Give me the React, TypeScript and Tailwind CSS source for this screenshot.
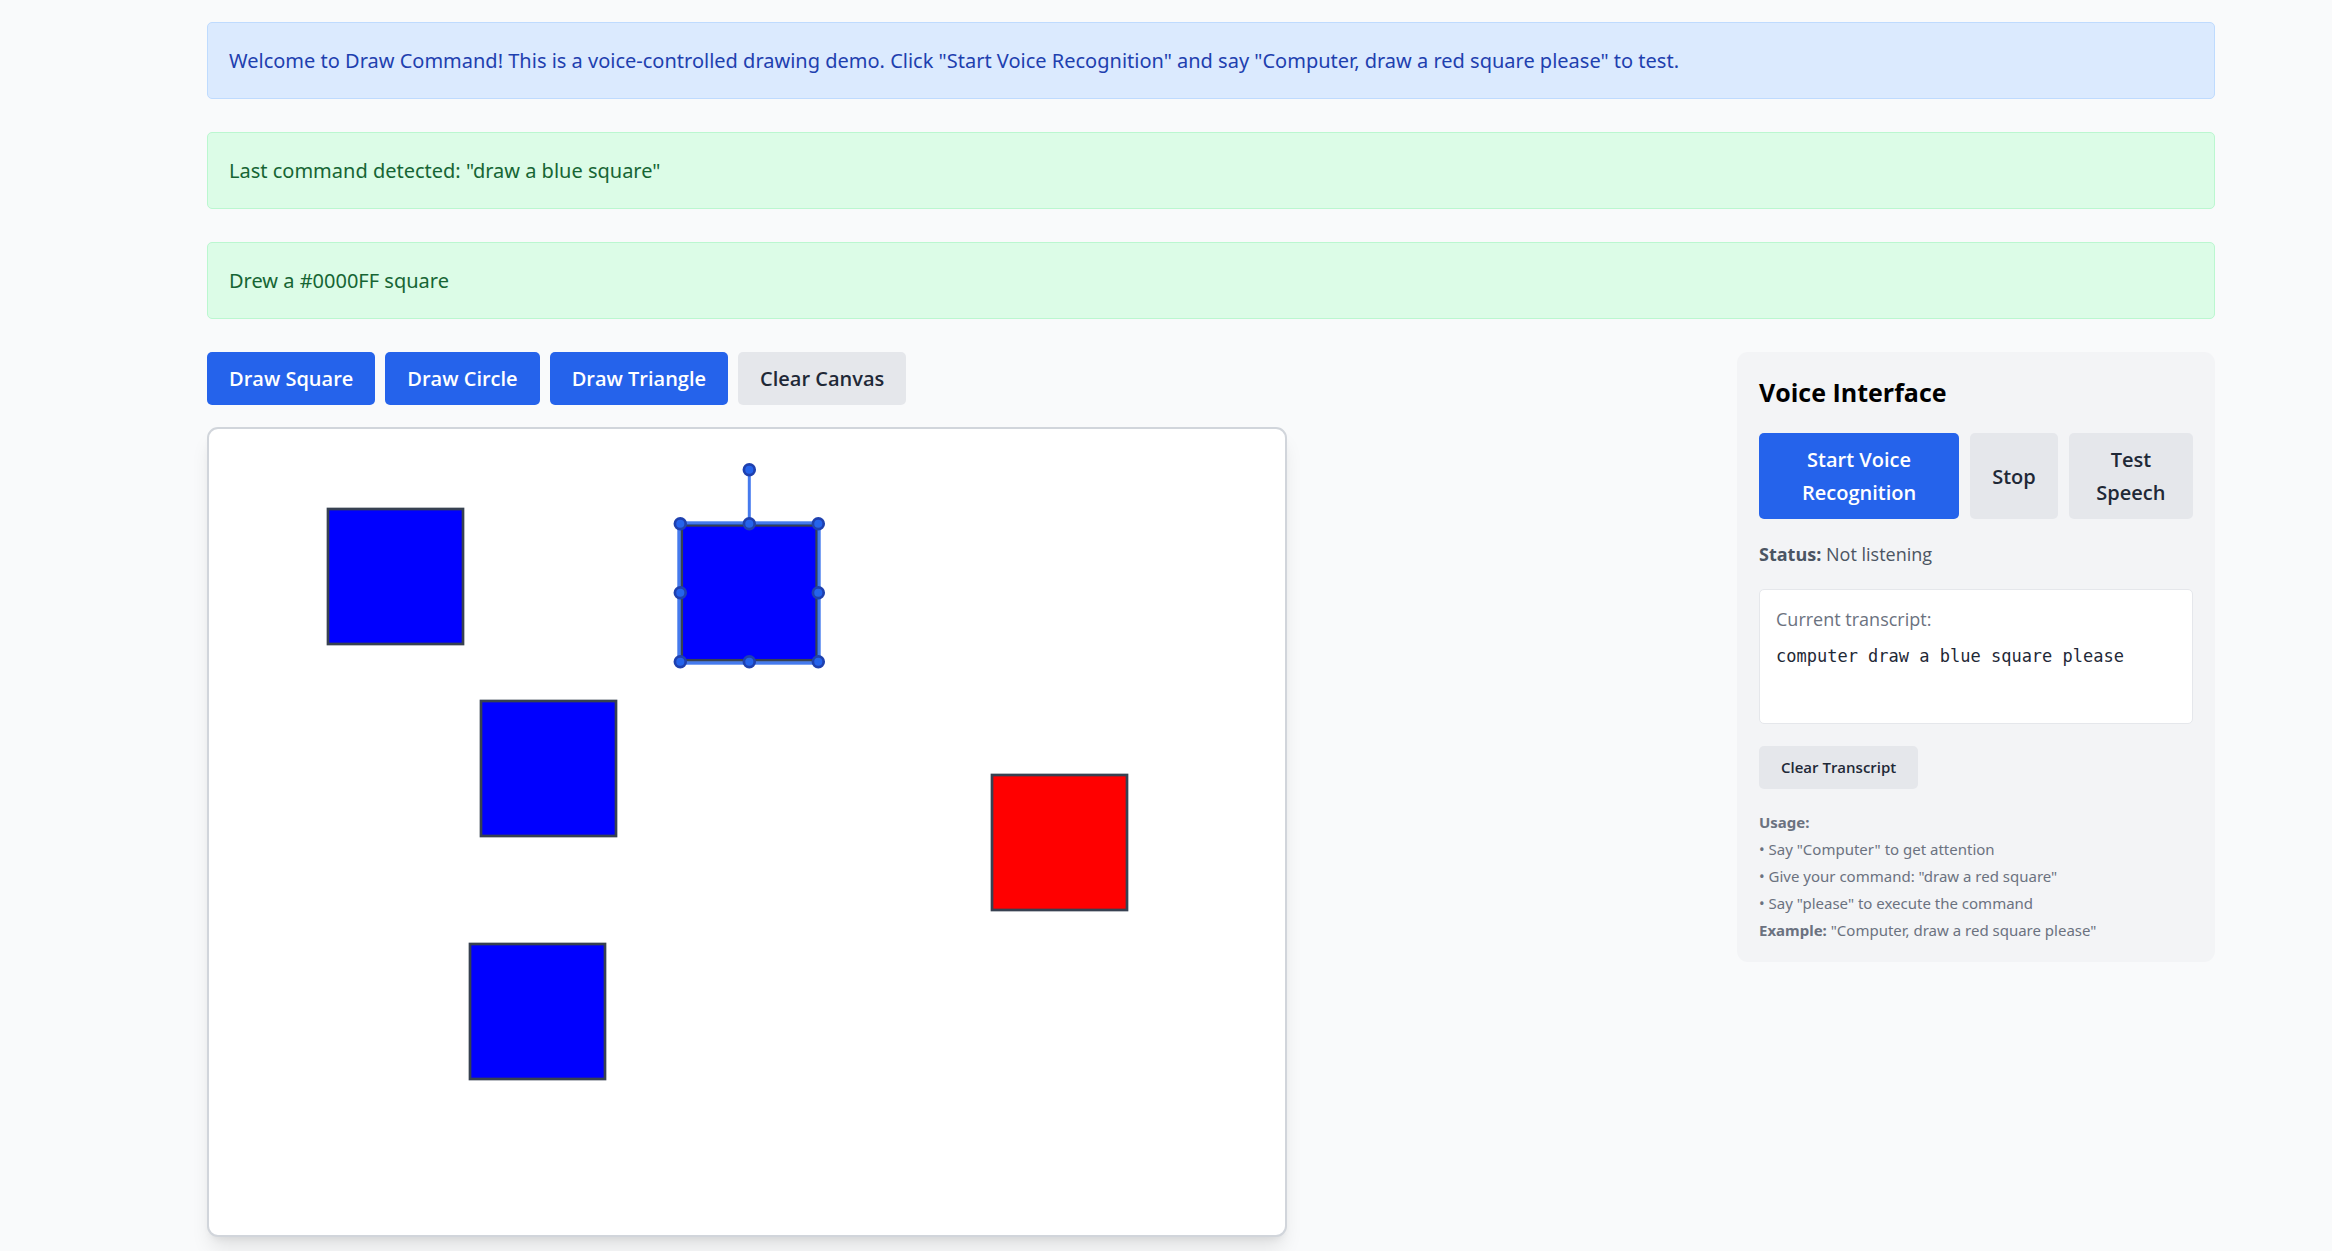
import type { ReactNode } from "react";

const SQUARES = [
  { x: 119, y: 80, fill: "#0000ff" },
  { x: 272, y: 272, fill: "#0000ff" },
  { x: 261, y: 515, fill: "#0000ff" },
  { x: 783, y: 346, fill: "#ff0000" },
];

const HANDLES = [
  [471, 95],
  [540, 95],
  [609, 95],
  [471, 164],
  [609, 164],
  [471, 233],
  [540, 233],
  [609, 233],
  [540, 41],
];

function Alert({ tone, children }: { tone: "info" | "success"; children: ReactNode }) {
  const colors =
    tone === "info"
      ? "border-[#bfdbfe] bg-[#dbeafe] text-[#1e40af]"
      : "border-[#bbf7d0] bg-[#dcfce7] text-[#166534]";
  return (
    <div role="status" className={`rounded-[5px] border p-[21px] leading-[33px] ${colors}`}>
      {children}
    </div>
  );
}

function Button({
  primary = false,
  small = false,
  children,
}: {
  primary?: boolean;
  small?: boolean;
  children: ReactNode;
}) {
  const tone = primary ? "bg-[#2563eb] text-white" : "bg-[#e5e7eb] text-[#1f2937]";
  const size = small ? "py-2 text-[15px] leading-[27px]" : "py-[10px] text-[20px] leading-[33px]";
  return (
    <button type="button" className={`rounded-[5px] px-[22px] font-['Open_Sans',sans-serif] font-semibold ${tone} ${size}`}>
      {children}
    </button>
  );
}

function Canvas() {
  return (
    <div className="w-[1080px] max-w-full overflow-hidden rounded-[11px] border-2 border-[#d1d5db] bg-white shadow-[0_14px_20px_-4px_rgba(0,0,0,0.1),0_5px_8px_-5px_rgba(0,0,0,0.1)]">
      <svg viewBox="0 0 1076 806" className="block h-auto w-full" role="img" aria-label="Drawing canvas">
        {SQUARES.map((s) => (
          <rect key={`${s.x}-${s.y}`} x={s.x} y={s.y} width="135" height="135" fill={s.fill} stroke="#374151" strokeWidth="2.7" />
        ))}
        <rect x="472.7" y="96.3" width="135" height="135" fill="#0000ff" stroke="#374151" strokeWidth="2.7" />
        <g stroke="#2563eb" fill="none" strokeOpacity="0.85">
          <rect x="470" y="94" width="140" height="140" strokeWidth="3.4" />
          <path d="M540.3 41V95" strokeWidth="3" />
        </g>
        {HANDLES.map(([x, y]) => (
          <circle key={`${x}-${y}`} cx={x + 0.3} cy={y - 0.3} r="5.4" fill="#2563eb" stroke="#1e40af" strokeWidth="2.7" />
        ))}
      </svg>
    </div>
  );
}

function VoicePanel() {
  return (
    <aside className="rounded-[11px] bg-[#f3f4f6] px-[22px] pt-[22px] pb-[18px]">
      <h2 className="mb-[22px] font-['Open_Sans',sans-serif] text-[25px] leading-[37px] font-bold text-black">
        Voice Interface
      </h2>
      <div className="mb-[22px] flex gap-[11px]">
        <Button primary>Start Voice Recognition</Button>
        <Button>Stop</Button>
        <Button>Test Speech</Button>
      </div>
      <p className="mb-[21px] font-['Open_Sans',sans-serif] text-[18px] leading-[27px] text-[#4b5563]">
        <strong className="font-bold">Status:</strong> Not listening
      </p>
      <div className="mb-[22px] min-h-[135px] rounded-[5px] border border-[#e5e7eb] bg-white p-4">
        <p className="mb-[5px] font-['Open_Sans',sans-serif] text-[18px] leading-[27px] text-[#6b7280]">
          Current transcript:
        </p>
        <p className="font-['DejaVu_Sans_Mono',monospace] text-[17px] leading-[37px] text-[#1f2937]">
          computer draw a blue square please
        </p>
      </div>
      <div className="mb-5 flex">
        <Button small>Clear Transcript</Button>
      </div>
      <div className="text-[15px] leading-[27px] text-[#6b7280]">
        <p className="font-bold">Usage:</p>
        <p>• Say "Computer" to get attention</p>
        <p>• Give your command: "draw a red square"</p>
        <p>• Say "please" to execute the command</p>
        <p>
          <strong className="font-bold">Example:</strong> "Computer, draw a red square please"
        </p>
      </div>
    </aside>
  );
}

export default function App() {
  return (
    <main className="min-h-screen bg-[#f9fafb] pt-[22px] pr-[117px] pb-3 pl-[207px] font-['Noto_Sans',sans-serif] text-[20px]">
      <div className="mb-[33px] flex flex-col gap-[33px]">
        <Alert tone="info">
          Welcome to Draw Command! This is a voice-controlled drawing demo. Click "Start Voice Recognition" and say
          "Computer, draw a red square please" to test.
        </Alert>
        <Alert tone="success">Last command detected: "draw a blue square"</Alert>
        <Alert tone="success">Drew a #0000FF square</Alert>
      </div>
      <div className="grid grid-cols-4 items-start gap-8">
        <section className="col-span-3">
          <div className="mb-[22px] flex flex-wrap gap-[10px]">
            <Button primary>Draw Square</Button>
            <Button primary>Draw Circle</Button>
            <Button primary>Draw Triangle</Button>
            <Button>Clear Canvas</Button>
          </div>
          <Canvas />
        </section>
        <VoicePanel />
      </div>
    </main>
  );
}
